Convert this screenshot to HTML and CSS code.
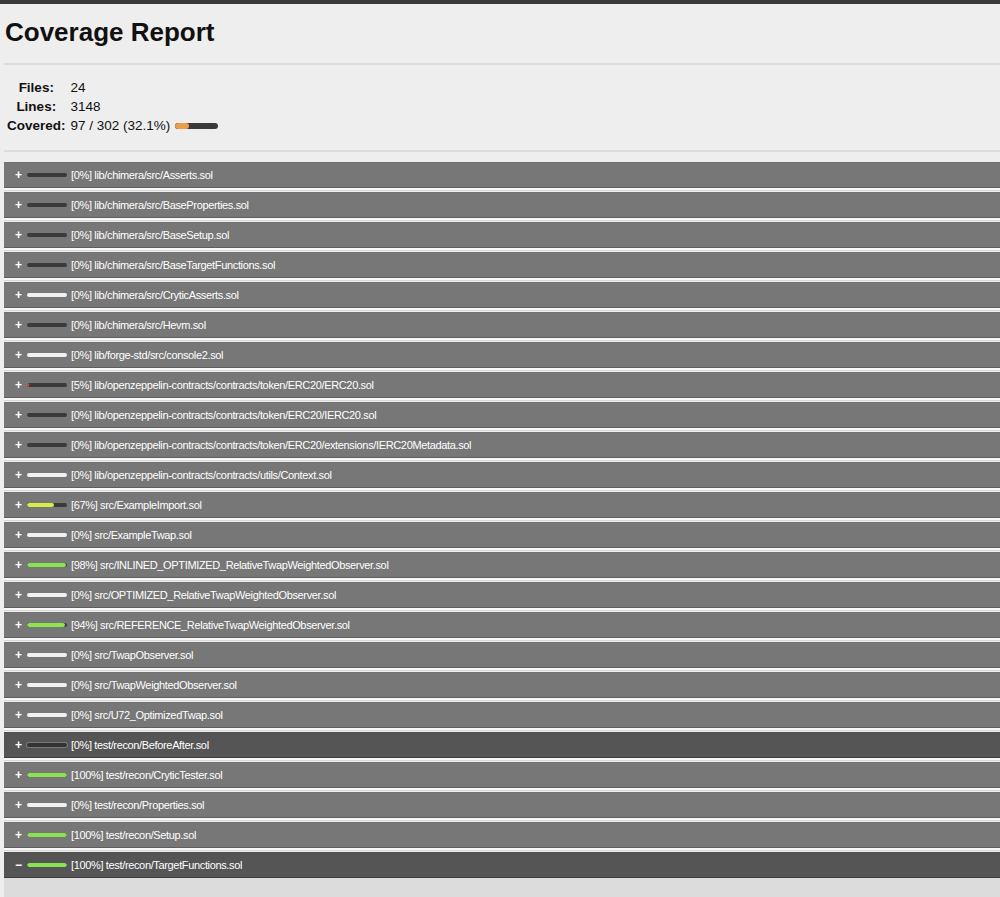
FILE: index.html
```html
<!DOCTYPE html>
<html lang="en">
<head>
<meta charset="utf-8">
<title>Coverage Report</title>
<link rel="stylesheet" href="styles.css">
</head>
<body>
<div class="topbar"></div>
<main class="page">
  <h1 class="title">Coverage Report</h1>
  <hr class="rule">
  <table class="stats">
    <tr><th>Files:</th><td>24</td></tr>
    <tr><th>Lines:</th><td>3148</td></tr>
    <tr><th>Covered:</th><td>97 / 302 (32.1%) <span class="bar bar--summary"><span class="fill" style="width:32.1%;background:hsl(32,78%,60%)"></span></span></td></tr>
  </table>
  <hr class="rule rule--bottom">
  <ul class="files">
    <li class="file"><span class="toggle">+</span><span class="bar"><span class="fill" style="width:0%"></span></span><span class="name">[0%] lib/chimera/src/Asserts.sol</span></li>
    <li class="file"><span class="toggle">+</span><span class="bar"><span class="fill" style="width:0%"></span></span><span class="name">[0%] lib/chimera/src/BaseProperties.sol</span></li>
    <li class="file"><span class="toggle">+</span><span class="bar"><span class="fill" style="width:0%"></span></span><span class="name">[0%] lib/chimera/src/BaseSetup.sol</span></li>
    <li class="file"><span class="toggle">+</span><span class="bar"><span class="fill" style="width:0%"></span></span><span class="name">[0%] lib/chimera/src/BaseTargetFunctions.sol</span></li>
    <li class="file"><span class="toggle">+</span><span class="bar bar--empty"></span><span class="name">[0%] lib/chimera/src/CryticAsserts.sol</span></li>
    <li class="file"><span class="toggle">+</span><span class="bar"><span class="fill" style="width:0%"></span></span><span class="name">[0%] lib/chimera/src/Hevm.sol</span></li>
    <li class="file"><span class="toggle">+</span><span class="bar bar--empty"></span><span class="name">[0%] lib/forge-std/src/console2.sol</span></li>
    <li class="file"><span class="toggle">+</span><span class="bar"><span class="fill" style="width:5%;background:hsl(5,75%,55%)"></span></span><span class="name">[5%] lib/openzeppelin-contracts/contracts/token/ERC20/ERC20.sol</span></li>
    <li class="file"><span class="toggle">+</span><span class="bar"><span class="fill" style="width:0%"></span></span><span class="name">[0%] lib/openzeppelin-contracts/contracts/token/ERC20/IERC20.sol</span></li>
    <li class="file"><span class="toggle">+</span><span class="bar"><span class="fill" style="width:0%"></span></span><span class="name">[0%] lib/openzeppelin-contracts/contracts/token/ERC20/extensions/IERC20Metadata.sol</span></li>
    <li class="file"><span class="toggle">+</span><span class="bar bar--empty"></span><span class="name">[0%] lib/openzeppelin-contracts/contracts/utils/Context.sol</span></li>
    <li class="file"><span class="toggle">+</span><span class="bar"><span class="fill" style="width:67%;background:hsl(67,80%,60%)"></span></span><span class="name">[67%] src/ExampleImport.sol</span></li>
    <li class="file"><span class="toggle">+</span><span class="bar bar--empty"></span><span class="name">[0%] src/ExampleTwap.sol</span></li>
    <li class="file"><span class="toggle">+</span><span class="bar"><span class="fill" style="width:98%;background:hsl(96,72%,60%)"></span></span><span class="name">[98%] src/INLINED_OPTIMIZED_RelativeTwapWeightedObserver.sol</span></li>
    <li class="file"><span class="toggle">+</span><span class="bar bar--empty"></span><span class="name">[0%] src/OPTIMIZED_RelativeTwapWeightedObserver.sol</span></li>
    <li class="file"><span class="toggle">+</span><span class="bar"><span class="fill" style="width:94%;background:hsl(94,72%,60%)"></span></span><span class="name">[94%] src/REFERENCE_RelativeTwapWeightedObserver.sol</span></li>
    <li class="file"><span class="toggle">+</span><span class="bar bar--empty"></span><span class="name">[0%] src/TwapObserver.sol</span></li>
    <li class="file"><span class="toggle">+</span><span class="bar bar--empty"></span><span class="name">[0%] src/TwapWeightedObserver.sol</span></li>
    <li class="file"><span class="toggle">+</span><span class="bar bar--empty"></span><span class="name">[0%] src/U72_OptimizedTwap.sol</span></li>
    <li class="file file--active"><span class="toggle">+</span><span class="bar bar--outlined"><span class="fill" style="width:0%"></span></span><span class="name">[0%] test/recon/BeforeAfter.sol</span></li>
    <li class="file"><span class="toggle">+</span><span class="bar"><span class="fill" style="width:100%;background:hsl(96,72%,60%)"></span></span><span class="name">[100%] test/recon/CryticTester.sol</span></li>
    <li class="file"><span class="toggle">+</span><span class="bar bar--empty"></span><span class="name">[0%] test/recon/Properties.sol</span></li>
    <li class="file"><span class="toggle">+</span><span class="bar"><span class="fill" style="width:100%;background:hsl(96,72%,60%)"></span></span><span class="name">[100%] test/recon/Setup.sol</span></li>
    <li class="file file--active file--open"><span class="toggle">&minus;</span><span class="bar"><span class="fill" style="width:100%;background:hsl(96,72%,60%)"></span></span><span class="name">[100%] test/recon/TargetFunctions.sol</span></li>
  </ul>
  <div class="source"></div>
</main>
</body>
</html>
```

FILE: styles.css
```css
html, body {
  margin: 0;
  padding: 0;
  background: #eeeeee;
  font-family: "Liberation Sans", Arial, Helvetica, sans-serif;
  color: #111;
}

.topbar {
  height: 4px;
  background: #3a3a3a;
}

.page {
  padding-left: 4px;
  overflow: hidden;
}

.title {
  margin: 13px 0 0 1px;
  font-size: 26px;
  line-height: 30px;
  font-weight: bold;
  color: #111;
}

.rule {
  border: 0;
  border-top: 2px solid #dcdcdc;
  margin: 16px 0 0 0;
  height: 0;
}

.rule--bottom {
  margin-top: 14px;
}

.stats {
  margin: 12px 0 0 0;
  font-size: 13.5px;
  line-height: 15px;
  border-spacing: 2px;
}

.stats th {
  padding: 1px;
  text-align: center;
  font-weight: bold;
}

.stats td {
  padding: 1px 1px 1px 2px;
  white-space: nowrap;
}

.bar {
  display: inline-block;
  position: relative;
  width: 40px;
  height: 4px;
  border-radius: 2px;
  background: #3a3a3a;
  overflow: hidden;
  flex: none;
}

.bar--summary {
  width: 43px;
  height: 6px;
  border-radius: 3px;
  vertical-align: 1px;
  margin-left: 1px;
}

.bar--empty {
  background: #f0f0f0;
}

.bar--outlined {
  box-shadow: 0 0 0 1px #7a7a7a;
  background: #333;
}

.fill {
  display: block;
  height: 100%;
  border-radius: inherit;
}

.files {
  list-style: none;
  margin: 10px 0 0 0;
  padding: 0;
}

.file {
  display: flex;
  align-items: center;
  box-sizing: border-box;
  height: 26px;
  padding-left: 10px;
  background: #777777;
  border-top: 1px solid #727272;
  border-bottom: 1px solid #5e5e5e;
  box-shadow: 0 2px 0 #f8f8f8, 0 3px 0 #d8d8d8;
  margin-bottom: 4px;
  color: #fff;
  font-size: 11px;
  letter-spacing: -0.35px;
  white-space: nowrap;
}

.file--active {
  background: #555555;
  border-top-color: #505050;
  border-bottom-color: #3c3c3c;
}

.file--open {
  margin-bottom: 0;
  box-shadow: none;
}

.toggle {
  width: 9px;
  text-align: center;
  font-weight: bold;
  font-size: 12px;
  letter-spacing: 0;
  margin-right: 4px;
  flex: none;
}

.name {
  margin-left: 4px;
}

.source {
  background: #dcdcdc;
  height: 120px;
}
```
